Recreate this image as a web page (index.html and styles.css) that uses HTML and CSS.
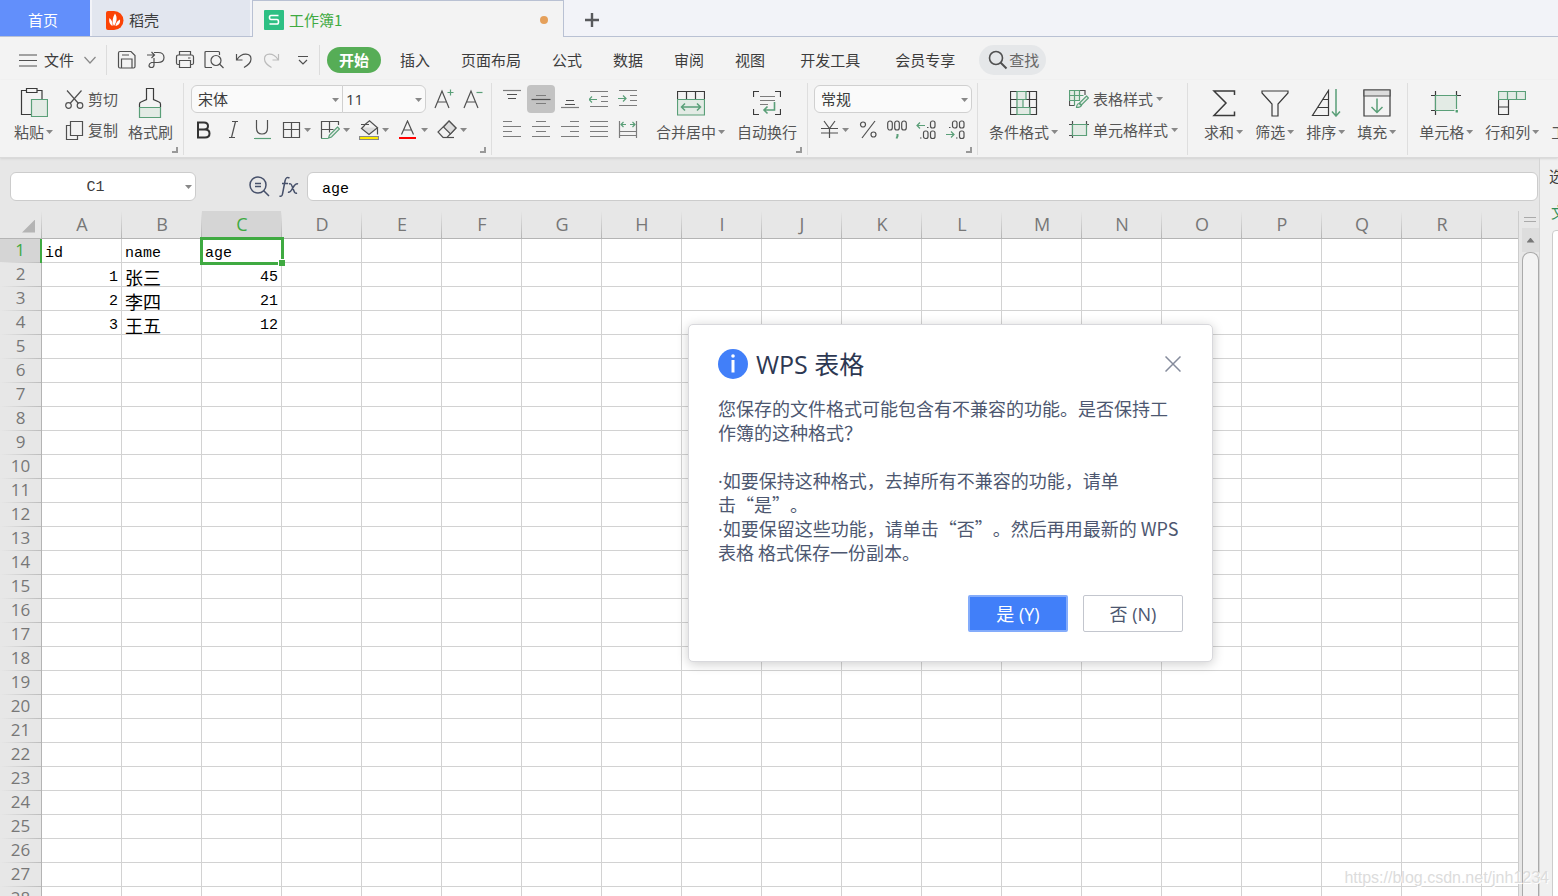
FILE: index.html
```html
<!DOCTYPE html>
<html lang="zh-CN">
<head>
<meta charset="utf-8">
<title>工作簿1</title>
<link rel="stylesheet" href="styles.css">
</head>
<body>
<header class="tabs">
  <button class="tab tab-home">首页</button>
  <button class="tab tab-docer">
    <svg width="18" height="19" viewBox="0 0 18 19"><path d="M2 0h6a9.500 9.500 0 0 1 0 19H2a2 2 0 0 1-2-2V2a2 2 0 0 1 2-2z" fill="#fb4306"/><path d="M8 15C5.500 11 7 6 9 2.500 11.500 6 11 11 8 15zM6.500 15C3 13 2.800 9.500 3.500 7 6 9 7 12 6.500 15zM9.500 15c.5-4 2.500-5.500 4.500-6.500.5 4-1.500 6-4.500 6.500z" fill="#fff"/></svg>
    稻壳
  </button>
  <button class="tab tab-book">
    <svg width="20" height="20" viewBox="0 0 20 20"><rect width="20" height="20" rx="1" fill="#2dc084"/><path d="M14.500 5.500H7q-1.500 0-1.500 2t1.500 2h6q1.500 0 1.500 2.300t-1.500 2.200H5.500" fill="none" stroke="#fff" stroke-width="1.600"/></svg>
    工作簿1
    <i class="unsaved"></i>
  </button>
  <button class="tab-add" aria-label="新建"><svg width="16" height="16" viewBox="0 0 16 16"><path d="M8 1v14M1 8h14" stroke="#58595c" stroke-width="2.400"/></svg></button>
</header>

<div class="menubar">
  <button class="file">
    <svg class="i" width="18" height="13" viewBox="0 0 18 13"><path d="M0 1h18M0 6.500h18M0 12h18"/></svg>
    文件
    <svg class="i light" width="12" height="8" viewBox="0 0 12 8"><path d="M.5 1l5.500 6L11.500 1"/></svg>
  </button>
  <div class="quick">
    <button aria-label="保存"><svg class="i" width="20" height="20" viewBox="0 0 20 20"><path d="M1.500 3q0-1.500 1.500-1.500h11L18 5.500v11q0 1.500-1.500 1.500H3q-1.500 0-1.500-1.500zM4.500 18V9h10.500v9M5 5h7"/></svg></button>
    <button aria-label="输出为PDF"><svg class="i" width="20" height="20" viewBox="0 0 20 20"><path d="M1 5h7M5.500 2l3 3-3 3M8 2.500h4q6 0 6 5t-6 5H8V15q0 2.500-2.500 2.500T3 15.500 5.500 12.500H12M8 12.500V8"/></svg></button>
    <button aria-label="打印"><svg class="i" width="20" height="20" viewBox="0 0 20 20"><path d="M4.500 5V1.500h11V5M4.500 14.500H3q-1.500 0-1.500-1.500V7q0-2 2-2h13q2 0 2 2v6q0 1.500-1.500 1.500h-1.500M4.500 10.500h11v7h-11zM13 8h2.500"/></svg></button>
    <button aria-label="打印预览"><svg class="i" width="20" height="20" viewBox="0 0 20 20"><path d="M8 17.500H2q-1 0-1-1V2.500q0-1 1-1h12.500q1 0 1 1V5M15.500 14l4 4"/><circle cx="12" cy="10.500" r="5"/></svg></button>
    <button aria-label="撤销"><svg class="i" width="20" height="20" viewBox="0 0 20 20"><path d="M3.500 4v6h6M4 9.500C9 2 18 3 18 9c0 4-3 6-7 8.500"/></svg></button>
    <button aria-label="恢复"><svg class="i faint" width="20" height="20" viewBox="0 0 20 20"><path d="M16.500 4v6h-6M16 9.500C11 2 2.500 3 2.500 9c0 4 3 6 7 8.500"/></svg></button>
    <button aria-label="更多"><svg class="i" width="10" height="10" viewBox="0 0 10 10"><path d="M0 1.500h10M1 5l4 4 4-4"/></svg></button>
  </div>
  <nav class="menu">
    <a href="#" class="on">开始</a><a href="#">插入</a><a href="#">页面布局</a><a href="#">公式</a><a href="#">数据</a><a href="#">审阅</a><a href="#">视图</a><a href="#" class="far">开发工具</a><a href="#" class="far">会员专享</a>
  </nav>
  <button class="find"><svg class="i" width="20" height="20" viewBox="0 0 20 20"><circle cx="8" cy="8" r="6.500" stroke-width="1.600"/><path d="M12.500 12.500l6 6" stroke-width="2"/></svg>查找</button>
</div>

<div class="ribbon">
  <section class="group">
    <button class="big"><span class="pic"><svg class="i" width="28" height="30" viewBox="0 0 28 30"><path d="M6 2.500H1.500v24H11M17 2.500h5V11M6.500.5h10.500v4H6.500z" class="dark"/><path class="gf" d="M11.500 11.500h16v17h-16z"/></svg></span><span class="cap">粘贴<i class="caret"></i></span></button>
    <div class="rows clip">
      <button class="small"><svg class="i" width="19" height="19" viewBox="0 0 19 19"><path d="M2 .5l11.500 13M16.500.5L5 13.500"/><circle cx="3.500" cy="15.500" r="2.800"/><circle cx="15" cy="15.500" r="2.800"/></svg>剪切</button>
      <button class="small"><svg class="i" width="19" height="19" viewBox="0 0 19 19"><path d="M5.500.5h12v14h-12zM5 4.500H1.500v14h11V15"/></svg>复制</button>
    </div>
    <button class="big"><span class="pic"><svg class="i" width="25" height="30" viewBox="0 0 25 30"><path class="dark" d="M1.500 19v-3q0-1.500 2-2.200l5-2.300V.5h7v11l5 2.300q2 .7 2 2.200v3"/><path class="gf" d="M1.500 19.500h21v10h-21z"/></svg></span><span class="cap">格式刷</span></button>
    <i class="corner"></i>
  </section>

  <section class="group font">
    <div class="rows">
      <div class="row">
        <span class="combo family"><select aria-label="字体"><option>宋体</option></select></span><span class="combo size"><select aria-label="字号"><option>11</option></select></span>
        <button class="grow" aria-label="增大字号"><svg class="i" width="20" height="20" viewBox="0 0 20 20"><path d="M1 19L8 2l7 17M4 13h8"/><path class="g" d="M13.500 3.500h6M16.500.5v6"/></svg></button>
        <button class="grow" aria-label="减小字号"><svg class="i" width="20" height="20" viewBox="0 0 20 20"><path d="M1 19L8 2l7 17M4 13h8"/><path class="g" d="M13.500 3.500h6"/></svg></button>
      </div>
      <div class="row fmt">
        <button aria-label="加粗"><svg class="i" width="20" height="20" viewBox="0 0 20 20"><path d="M4 2.500h6q4 0 4 3.500t-4 3.500H4h7q4.500 0 4.500 4t-4.500 4H4z" stroke="#333" stroke-width="2"/></svg></button>
        <button aria-label="倾斜"><svg class="i" width="20" height="20" viewBox="0 0 20 20"><path d="M9 1.500h6M6 17.500h6M12.500 1.500l-4 16"/></svg></button>
        <button aria-label="下划线"><svg class="i" width="20" height="20" viewBox="0 0 20 20"><path d="M4.500 0v8q0 6 5.500 6t5.500-6V0"/><path class="g" d="M2 18.500h17"/></svg></button>
        <button aria-label="边框"><svg class="i" width="20" height="20" viewBox="0 0 20 20"><path d="M2.500 2.500h16v15h-16zM10.500 2.500v15M2.500 9.500h16"/></svg><i class="caret"></i></button>
        <button aria-label="绘制边框"><svg class="i" width="20" height="20" viewBox="0 0 20 20"><path d="M1.500 18V1.500h17V5M9.500 1.500v11M1.500 9.500h12"/><path class="gf" d="M17.500 7l2 2-8 8-3 1 1-3zM1 18.500h7"/></svg><i class="caret"></i></button>
        <button aria-label="填充颜色"><svg class="i" width="20" height="20" viewBox="0 0 20 20"><path d="M3.500 7.500h12l2 1-7.500 6-7-6z" fill="#ddd" stroke="none"/><path d="M2 4.500h8M6 4.500L10.500.8l8 7L10 14.500 2.500 8.500 6 5M18.500 8v6.500"/><path d="M.5 16.500h19v3H.5z" fill="#ffeb00" stroke="#888"/></svg><i class="caret"></i></button>
        <button aria-label="字体颜色"><svg class="i" width="20" height="20" viewBox="0 0 20 20"><path d="M3.500 14.500L9.500 1l6 13.500M5.500 10h8"/><path d="M1 18h17" stroke="#f00" stroke-width="2"/></svg><i class="caret"></i></button>
        <button aria-label="清除"><svg class="i" width="20" height="20" viewBox="0 0 20 20"><path d="M12 1l7 7-9 9.500H6L1 12z"/><path d="M12 1l7 7-5.500 6-7-7z" fill="#ddd"/><path d="M6 17.500h11"/></svg><i class="caret"></i></button>
      </div>
    </div>
    <i class="corner"></i>
  </section>

  <section class="group align">
    <div class="rows">
      <div class="row">
        <button aria-label="顶端对齐"><svg class="i" width="20" height="20" viewBox="0 0 20 20"><path d="M1 1.500h18" class="mid"/><path d="M5 5.500h10M6 9.500h8"/></svg></button>
        <button class="pressed" aria-label="垂直居中"><svg class="i" width="20" height="20" viewBox="0 0 20 20"><path d="M.5 10.500h19"/><path d="M5 6.500h10M5 14.500h10" class="mid"/></svg></button>
        <button aria-label="底端对齐"><svg class="i" width="20" height="20" viewBox="0 0 20 20"><path d="M1 18.500h18" class="mid"/><path d="M6 11.500h8M5 15.500h10"/></svg></button>
        <button aria-label="减少缩进"><svg class="i" width="20" height="20" viewBox="0 0 20 20"><path d="M1 2.500h18M12 7.500h7M12 12.500h7M1 17.500h18" class="mid"/><path class="g" d="M0 10.500h8M3 7.500l-3 3 3 3"/></svg></button>
        <button aria-label="增加缩进"><svg class="i" width="20" height="20" viewBox="0 0 20 20"><path d="M1 1.500h18M12 6.500h7M12 11.500h7M1 16.500h18" class="mid"/><path class="g" d="M0 9.500h8M5 6.500l3 3-3 3"/></svg></button>
      </div>
      <div class="row">
        <button aria-label="左对齐"><svg class="i mid" width="20" height="20" viewBox="0 0 20 20"><path d="M1 1.500h9M1 6.500h18M1 11.500h9M1 16.500h18"/></svg></button>
        <button aria-label="居中"><svg class="i mid" width="20" height="20" viewBox="0 0 20 20"><path d="M5 1.500h10M1 6.500h18M5 11.500h10M1 16.500h18"/></svg></button>
        <button aria-label="右对齐"><svg class="i mid" width="20" height="20" viewBox="0 0 20 20"><path d="M10 1.500h9M1 6.500h18M10 11.500h9M1 16.500h18"/></svg></button>
        <button aria-label="两端对齐"><svg class="i mid" width="20" height="20" viewBox="0 0 20 20"><path d="M1 1.500h18M1 6.500h18M1 11.500h18M1 16.500h18"/></svg></button>
        <button aria-label="分散对齐"><svg class="i" width="20" height="20" viewBox="0 0 20 20"><path d="M1.500 1v17M18.500 1v17M1 11.500h18M1 15.500h18" class="mid"/><path class="g" d="M3 4.500h5M5.500 2L3 4.500 5.500 7M17 4.500h-5M14.500 2L17 4.500 14.500 7"/></svg></button>
      </div>
    </div>
    <button class="big"><span class="pic"><svg class="i" width="28" height="26" viewBox="0 0 28 26"><path class="dark" d="M.5 9V1.500h27V9M9.500 1.500V9M18.500 1.500V9"/><path class="gf" d="M.5 9.500h27v15.500H.5z"/><path class="g" stroke-width="1.500" d="M5 17h18M8 13.500L4.500 17 8 20.500M20 13.500l3.500 3.500-3.500 3.500"/></svg></span><span class="cap">合并居中<i class="caret"></i></span></button>
    <button class="big"><span class="pic"><svg class="i" width="28" height="26" viewBox="0 0 28 26"><path class="dark" d="M.5 7V1.500H6M22 1.500h5.500V7M.5 19v5.500H6M22 24.500h5.500V19"/><path class="mid" d="M7 6.500h15M7 10.500h15M7 14.500h8"/><path class="g" stroke-width="1.600" d="M21.500 12v8H11M14.500 16.500L11 20l3.500 3.500"/></svg></span><span class="cap">自动换行</span></button>
    <i class="corner"></i>
  </section>

  <section class="group number">
    <div class="rows">
      <div class="row"><span class="combo kind"><select aria-label="数字格式"><option>常规</option></select></span></div>
      <div class="row fmt">
        <button aria-label="货币"><svg class="i" width="20" height="20" viewBox="0 0 20 20"><path d="M5 1l5.500 7.500L16 1M10.500 8.500V18M2 8.500h17M2 13h17"/></svg><i class="caret"></i></button>
        <button aria-label="百分比"><svg class="i" width="20" height="20" viewBox="0 0 20 20"><path d="M17 1L4 18"/><circle cx="5" cy="4.500" r="2.500"/><circle cx="15.500" cy="14.500" r="2.500"/></svg></button>
        <button aria-label="千位分隔"><svg class="i" width="20" height="20" viewBox="0 0 20 20"><rect x=".7" y="1" width="4.600" height="9" rx="2.300"/><rect x="7.700" y="1" width="4.600" height="9" rx="2.300"/><rect x="14.700" y="1" width="4.600" height="9" rx="2.300"/><path class="g" stroke-width="2" d="M10.500 14v2l-1 2.500"/></svg></button>
        <button aria-label="增加小数位"><svg class="i" width="20" height="20" viewBox="0 0 20 20"><rect x="14.500" y="1" width="4.500" height="7" rx="2"/><rect x="7.500" y="11" width="4.500" height="7.500" rx="2"/><rect x="14.500" y="11" width="4.500" height="7.500" rx="2"/><path d="M11 7.500h1.500M4 18h1.500"/><path class="g" d="M1 5.500h8M4 2.500l-3 3 3 3"/></svg></button>
        <button aria-label="减少小数位"><svg class="i" width="20" height="20" viewBox="0 0 20 20"><rect x="7.500" y="1" width="4.500" height="7" rx="2"/><rect x="14.500" y="1" width="4.500" height="7" rx="2"/><rect x="14.500" y="11" width="4.500" height="7.500" rx="2"/><path d="M4 7.500h1.500M11 18h1.500"/><path class="g" d="M1 14.500h8M6 11.500l3 3-3 3"/></svg></button>
      </div>
    </div>
    <i class="corner"></i>
  </section>

  <section class="group styles">
    <button class="big"><span class="pic"><svg class="i" width="28" height="26" viewBox="0 0 28 26"><path class="dark" d="M.5 1.500h26v23H.5zM.5 9.500h26M.5 17.500h26M7.500 1.500v23M19.500 1.500v23"/><path class="gf" d="M7 1.500h9v8H7zM7 9.500h6v8H7zM7 17.500h13v7H7z"/></svg></span><span class="cap">条件格式<i class="caret"></i></span></button>
    <div class="rows">
      <button class="small"><svg class="i" width="20" height="20" viewBox="0 0 20 20"><path d="M.5 10v6.500h5M11 1.500h5V6M.5 11h8"/><path class="gf" d="M.5 1.500h10v10H.5zM5.500 1.500v15M.5 6.500h14"/><path class="gf" d="M17.500 7l2 2-7 7-2-2zM10 14.500q-2 0-2.500 4 4 0 5-2z"/></svg>表格样式<i class="caret"></i></button>
      <button class="small"><svg class="i" width="20" height="20" viewBox="0 0 20 20"><path d="M3.500 1v17M0 4.500h20M0 15.500h6M17.500 1v6"/><path class="gf" d="M3.500 4.500h14v11h-14z"/></svg>单元格样式<i class="caret"></i></button>
    </div>
  </section>

  <section class="group edit">
    <button class="big"><span class="pic"><svg class="i" width="26" height="28" viewBox="0 0 26 28"><path class="dark" d="M23.500 6V2H3l12 12L3 26.500h20.500v-4" stroke-width="1.500"/></svg></span><span class="cap">求和<i class="caret"></i></span></button>
    <button class="big"><span class="pic"><svg class="i" width="28" height="28" viewBox="0 0 28 28"><path class="dark" d="M1 2h26v2L17 15v12h-6V15L1 4z"/></svg></span><span class="cap">筛选<i class="caret"></i></span></button>
    <button class="big"><span class="pic"><svg class="i" width="30" height="28" viewBox="0 0 30 28"><path class="dark" d="M17.500 1.500v25H1.500zM12 10.500h5.500M7 18.500h10.500"/><path class="g" stroke-width="1.500" d="M25 0v27M21 22.500l4 4.500 4-4.500"/></svg></span><span class="cap">排序<i class="caret"></i></span></button>
    <button class="big"><span class="pic"><svg class="i" width="28" height="28" viewBox="0 0 28 28"><path class="dark" d="M1 1h26v26H1z"/><path d="M1 1h26v6H1z" fill="#dcdcdc"/><path class="g" stroke-width="1.500" d="M14 9.500v14M8.500 18l5.500 5.500L19.500 18"/></svg></span><span class="cap">填充<i class="caret"></i></span></button>
  </section>

  <section class="group last">
    <button class="big"><span class="pic"><svg class="i" width="30" height="26" viewBox="0 0 30 26"><path class="dark" d="M4.500 1v24M0 5.500h6M0 20.500h6M25.500 1v5M24 5.500h6"/><path class="gf" d="M4.500 5.500h21v15h-21z"/><path d="M24 19.500h3.500v3.500H24z" fill="#4e9d70" stroke="#f3f3f3"/></svg></span><span class="cap">单元格<i class="caret"></i></span></button>
    <button class="big"><span class="pic"><svg class="i" width="28" height="26" viewBox="0 0 28 26"><path class="dark" d="M.5 9v15.500h10V9M.5 17h10"/><path class="gf" d="M.5 1.500h27v8H.5zM9.500 1.500v8M18.500 1.500v8"/></svg></span><span class="cap">行和列<i class="caret"></i></span></button>
    <button class="big"><span class="pic"></span><span class="cap">工作表<i class="caret"></i></span></button>
  </section>
</div>

<div class="work">
  <main class="main">
    <div class="formula">
      <span class="combo namebox"><select aria-label="名称框"><option>C1</option></select></span>
      <button class="fx" aria-label="浏览"><svg class="navy" width="21" height="21" viewBox="0 0 21 21"><circle cx="9" cy="9" r="8"/><path d="M6 7.500h6M6 10.500h6M14.500 14.500l5.500 5.500"/></svg></button>
      <button class="fx" aria-label="插入函数"><svg class="navy" width="20" height="22" viewBox="0 0 20 22"><path d="M10.500 2Q7 0 6 5L3.500 18Q3 21 .5 20M3 7.500h6M10 8q2-1 3 2l2 5q1 3 3 2M19 8q-2-1-4 2l-2.500 4q-1.500 3-3.500 2"/></svg></button>
      <input class="formula-text" aria-label="编辑栏" value="age">
    </div>
    <div class="sheet">
      <div class="cells"><table id="grid"></table></div>
      <div class="scroll">
        <i class="split"></i>
        <button class="up" aria-label="向上滚动"></button>
        <i class="thumb"></i>
      </div>
    </div>
  </main>
  <aside class="pane">
    <h2>选择窗格</h2>
    <h3>文档中的对象</h3>
    <div class="pane-list"></div>
  </aside>
</div>

<div class="dialog" role="dialog" aria-labelledby="dlg-title">
  <div class="dialog-head">
    <svg width="30" height="30" viewBox="0 0 30 30"><circle cx="15" cy="15" r="15" fill="#417ff9"/><circle cx="15" cy="7" r="1.800" fill="#fff"/><path d="M15 11v12.500" stroke="#fff" stroke-width="3"/></svg>
    <h1 id="dlg-title">WPS 表格</h1>
    <button class="close" aria-label="关闭"><svg width="16" height="16" viewBox="0 0 16 16"><path d="M.5.5l15 15M15.500.5l-15 15" stroke="#858b9c" stroke-width="1.500"/></svg></button>
  </div>
  <p>您保存的文件格式可能包含有不兼容的功能。是否保持工<br>作簿的这种格式？</p>
  <p><span class="dot">·</span>如要保持这种格式，去掉所有不兼容的功能，请单<br>击“是”。<br><span class="dot">·</span>如要保留这些功能，请单击“否”。然后再用最新的 WPS<br>表格 格式保存一份副本。</p>
  <div class="actions"><button class="yes">是 (Y)</button><button class="no">否 (N)</button></div>
</div>
<div class="mark">https://blog.csdn.net/jnh1234</div>
<script src="grid.js"></script>
</body>
</html>
```
FILE: styles.css
```css
* { box-sizing: border-box; }
body {
  margin: 0;
  height: 100vh;
  display: flex;
  flex-direction: column;
  position: relative;
  overflow: hidden;
  background: #e7e7e7;
  color: #3c3c3c;
  font: 15px/20px "Noto Sans CJK SC", sans-serif;
}
button, select, input { font: inherit; color: inherit; margin: 0; padding: 0; border: 0; background: none; }
button { display: flex; align-items: center; justify-content: center; white-space: nowrap; flex: none; }
svg { display: block; flex: none; }
.i { fill: none; stroke: #505050; stroke-width: 1.2; }
.i .dark { stroke: #3a3a3a; }
.mid, .i .mid { stroke: #7c7c7c; }
.light { stroke: #888; }
.faint { stroke: #bbb; }
.i .g { stroke: #5a9f78; }
.i .gf { stroke: #5a9f78; fill: #e3ebe5; }
.navy { fill: none; stroke: #46506a; stroke-width: 1.5; }

/* window tabs */
.tabs { display: flex; height: 37px; flex: none; background: #f2f3f8; border-bottom: 1px solid #b9c1d3; }
.tab-home { width: 90px; margin-right: 2px; padding-right: 4px; background: #628ffb; color: #fff; padding-top: 4px; }
.tab-docer { width: 158px; margin-right: 2px; padding: 4px 0 0 14px; gap: 5px; justify-content: flex-start; background: #e2e6ef; }
.tab-book {
  width: 312px; height: 37px; padding: 1px 15px 0 11px; gap: 5px; justify-content: flex-start;
  background: #f3f3f3; border: 1px solid #b9c1d3; border-bottom: 0; color: #3faa41;
}
.unsaved { width: 8px; height: 8px; margin-left: auto; border-radius: 50%; background: #e5a05a; }
.tab-add { width: 56px; padding-top: 3px; }

/* menu */
.menubar { display: flex; align-items: center; flex: none; height: 43px; padding: 3px 0 0 19px; background: #f3f3f3; }
.file { gap: 7px; padding-right: 10px; }
.file .light { margin-left: 3px; }
.quick { display: flex; align-items: center; gap: 9px; height: 30px; padding: 0 4px 0 10px; border: solid #dcdcdc; border-width: 0 1px; }
.quick button:last-child { width: 24px; }
.menu { display: flex; align-items: center; gap: 31px; margin-left: 7px; }
.menu a { color: inherit; text-decoration: none; }
.menu .on { padding: 3px 12px; margin-right: -12px; border-radius: 13px; background: #56ad56; color: #fff; font-weight: bold; }
.menu .far { margin-left: 4px; }
.find { height: 30px; margin-left: 24px; padding: 0 7px 0 9px; gap: 1px; border-radius: 15px; background: #e5e7e9; color: #666; }

/* ribbon */
.ribbon { display: flex; flex: none; height: 78px; overflow: hidden; background: #f3f3f3; border-bottom: 1px solid #dadada; box-shadow: 0 1px 2px #d4d4d4; color: #555; z-index: 1; }
.group { position: relative; display: flex; flex: none; padding: 5px 11px 0 14px; }
.group:not(.last)::after { content: ""; position: absolute; right: 0; top: 3px; bottom: 2px; width: 1px; background: #dedede; }
.big { flex-direction: column; justify-content: flex-start; padding-top: 3px; }
.pic { display: flex; align-items: center; height: 30px; margin-bottom: 4px; }
.cap { display: flex; align-items: center; gap: 2px; }
.caret { flex: none; width: 7px; height: 4px; background: #888; clip-path: polygon(0 0, 100% 0, 50% 100%); }
.rows { display: flex; flex-direction: column; gap: 3px; }
.clip { margin: 0 10px 0 12px; }
.row { display: flex; align-items: center; height: 28px; }
.small { height: 28px; gap: 4px; justify-content: flex-start; }
.corner { position: absolute; right: 6px; bottom: 4px; width: 6px; height: 6px; border: solid #999; border-width: 0 2px 2px 0; }
.combo { position: relative; display: flex; height: 28px; border: 1px solid #d0d0d0; background: #fafafa; }
.combo::after { content: ""; position: absolute; right: 3px; top: 12px; width: 7px; height: 4px; background: #888; clip-path: polygon(0 0, 100% 0, 50% 100%); pointer-events: none; }
.combo select { appearance: none; width: 100%; padding-left: 6px; color: #3c3c3c; }
.family { width: 152px; border-radius: 6px 0 0 6px; }
.size { width: 84px; margin: 0 8px 0 -1px; border-radius: 0 6px 6px 0; }
.size select { padding-left: 3px; font-family: "Open Sans", sans-serif; }
.kind { width: 158px; border-radius: 6px; }
.grow { margin-right: 9px; }
.fmt { gap: 9px; padding-left: 3px; }
.fmt button { gap: 3px; }
.font { padding: 5px 0 0 7px; }
.align { padding-left: 6px; }
.align .row { gap: 1px; }
.align .row button { width: 28px; height: 28px; border-radius: 4px; }
.align .pressed { background: #c3c3c3; }
.align .big { margin-left: 12px; }
.align .rows { margin-right: 2px; }
.number { padding: 5px 6px 0; }
.number .fmt { padding-left: 5px; }
.styles { padding: 5px 10px 0 11px; gap: 11px; }
.styles .small .caret { margin-left: -1px; }
.edit { padding: 5px 12px 0 16px; gap: 12px; }
.last { padding: 5px 0 0 11px; gap: 12px; }

/* work area */
.work { display: flex; flex: 1; min-height: 0; }
.main { display: flex; flex-direction: column; flex: 1; min-width: 0; }
.formula { display: flex; align-items: center; flex: none; height: 53px; padding: 4px 1px 0 10px; }
.namebox { width: 186px; height: 29px; margin-right: 53px; border-color: #ccc; border-radius: 6px; background: #fff; }
.namebox select { padding: 3px 15px 0 0; text-align: center; text-align-last: center; font-family: "Liberation Mono", monospace; }
.fx { margin-right: 9px; }
.fx + .formula-text { margin-left: -1px; }
.formula-text { flex: 1; min-width: 0; height: 29px; padding: 5px 14px 0; border: 1px solid #ccc; border-radius: 6px; background: #fff; color: #000; font-family: "Liberation Mono", monospace; }
.sheet { display: flex; flex: 1; min-height: 0; }
.cells { flex: 1; min-width: 0; overflow: hidden; border-right: 1px solid #ccc; background: #fff; }
table { width: 1562px; table-layout: fixed; border-collapse: separate; border-spacing: 0; }
th { padding: 0; color: #777; background: #e7e7e7; font: 17px/21px "Open Sans", sans-serif; }
thead th { height: 28px; font-size: 18px; border-bottom: 1px solid #b4b4b4; background: linear-gradient(#e7e7e7, #b4b4b4) right / 1px 100% no-repeat #e7e7e7; }
thead th:first-child { width: 42px; }
thead .sel { background-color: #d5d5d5; color: #3faa41; }
tbody th { height: 24px; vertical-align: top; border-right: 1px solid #b4b4b4; background: linear-gradient(90deg, #e7e7e7, #bdbdbd) bottom / 100% 1px no-repeat #e7e7e7; }
tbody .sel { background-color: #d5d5d5; color: #3faa41; border-right: 2px solid #3faa41; }
td { position: relative; height: 24px; padding: 7px 3px 0; border: solid #d2d2d2; border-width: 0 1px 1px 0; color: #000; font: 15px/16px "Liberation Mono", "Noto Sans CJK SC", monospace; white-space: nowrap; }
td.num { text-align: right; }
td.zh { padding-top: 5px; font-size: 18px; line-height: 18px; font-family: "Noto Sans CJK SC", sans-serif; }
td.active::before { content: ""; position: absolute; z-index: 1; inset: -2px -3px -3px -2px; border: 3px solid #3faa41; }
td.active::after { content: ""; position: absolute; z-index: 2; right: -4px; bottom: -4px; width: 6px; height: 6px; background: #3faa41; border: solid #fff; border-width: 1px 0 0 1px; }
.all { display: block; width: 13px; height: 13px; margin: 3px 0 0 22px; background: #b4b4b4; clip-path: polygon(100% 0, 100% 100%, 0 100%); }
.scroll { display: flex; flex-direction: column; align-items: flex-end; width: 20px; flex: none; }
.split { flex: none; width: 12px; height: 5px; margin: 6px 3px 6px 0; border: solid #aaa; border-width: 1px 0; }
.up { width: 17px; height: 24px; background: #ddd; }
.up::before { content: ""; width: 8px; height: 5px; background: #777; clip-path: polygon(50% 0, 100% 100%, 0 100%); }
.thumb { flex: 1; width: 17px; border: 1px solid #aaa; border-bottom: 0; border-radius: 8px 8px 0 0; background: #f3f3f3; }
.pane { width: 19px; flex: none; overflow: hidden; padding: 8px 0 0 9px; border-left: 1px solid #d5d5d5; background: #f0f0f0; white-space: nowrap; }
.pane h2, .pane h3 { margin: 0; font-size: 15px; font-weight: normal; }
.pane h3 { margin: 16px 0 8px 2px; color: #2f8f57; }
.pane-list { width: 200px; height: 100%; margin-left: 3px; border: 1px solid #ccc; border-radius: 4px; background: #fff; }

/* message window */
.dialog { position: absolute; z-index: 5; left: 688px; top: 324px; width: 525px; padding: 23px 29px 29px; border: 1px solid #d8d8dc; border-radius: 5px; background: #fff; box-shadow: 0 2px 12px rgba(0, 0, 0, .2); color: #4d5770; font-size: 18px; line-height: 24px; }
.dialog-head { display: flex; align-items: center; gap: 8px; height: 31px; margin-bottom: 17px; }
.dialog h1 { margin: 0; color: #2d3852; font: 25px/30px "Open Sans", "Noto Sans CJK SC", sans-serif; }
.close { margin: 0 2px 0 auto; }
.dialog p { margin: 0 0 24px; white-space: nowrap; text-spacing-trim: space-all; }
.dot { font-family: "Open Sans", sans-serif; line-height: 1px; }
.actions { display: flex; justify-content: flex-end; gap: 15px; padding-top: 7px; }
.actions button { width: 100px; height: 37px; border-radius: 2px; font-family: "Open Sans", "Noto Sans CJK SC", sans-serif; }
.yes { background: #417ff9; border: 2px solid #84acfb; color: #fff; }
.no { border: 1px solid #c3c6ce; }
.mark { position: absolute; z-index: 4; right: 9px; bottom: 8px; color: #dcdcdc; font: 16px/20px "Liberation Sans", sans-serif; text-shadow: 1px 1px 0 #fff; }
```
FILE: grid.js
```js
const data = [["id", "name", "age"], [1, "张三", 45], [2, "李四", 21], [3, "王五", 12]];
const letters = [..."ABCDEFGHIJKLMNOPQR", ""];
let html = '<thead><tr><th><span class="all"></span></th>';
for (const c of letters) html += `<th${c === "C" ? ' class="sel"' : ""}>${c}</th>`;
html += "</tr></thead><tbody>";
for (let r = 0; r < 28; r++) {
  html += `<tr><th${r === 0 ? ' class="sel"' : ""}>${r + 1}</th>`;
  letters.forEach((_, c) => {
    const v = data[r] && data[r][c] !== undefined ? data[r][c] : "";
    let cls = "";
    if (typeof v === "number") cls = "num";
    else if (/[^\x00-\x7f]/.test(v)) cls = "zh";
    if (r === 0 && c === 2) cls = "active";
    html += cls ? `<td class="${cls}">${v}</td>` : `<td>${v}</td>`;
  });
  html += "</tr>";
}
document.getElementById("grid").innerHTML = html + "</tbody>";
```
